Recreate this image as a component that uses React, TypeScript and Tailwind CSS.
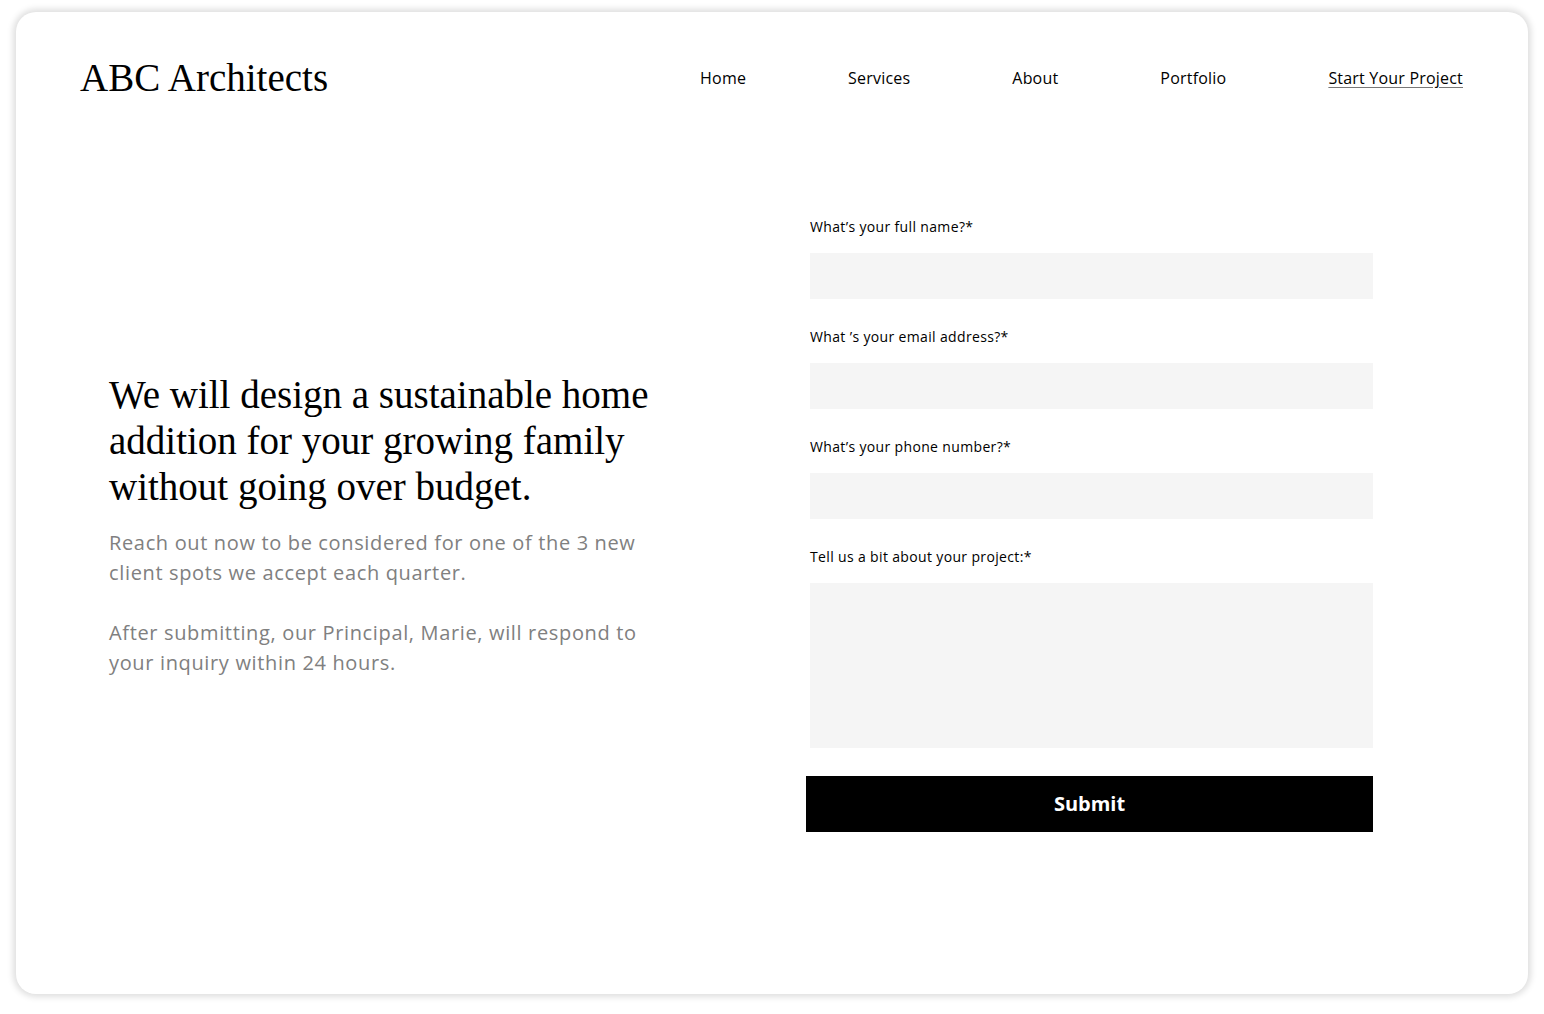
import React from 'react'

const sans = "font-['Open_Sans','Liberation_Sans',sans-serif]"
const serif = "font-['Liberation_Serif','DejaVu_Serif',serif]"

function Field({ label, tall }: { label: string; tall?: boolean }) {
  return (
    <div className="flex flex-col">
      <label className={`${sans} text-[14px] leading-[20px] tracking-[0.35px] text-black mb-[16px]`}>{label}</label>
      <div className={`bg-[#f5f5f5] w-[563px] ${tall ? 'h-[165px]' : 'h-[46px]'}`} />
    </div>
  )
}

export default function App() {
  const links = ['Home', 'Services', 'About', 'Portfolio']
  return (
    <div className="min-h-[1014px] bg-white pt-[12px] pl-[16px]">
      <div className="w-[1512px] h-[982px] bg-white rounded-[20px] shadow-[0_0_6px_3px_rgba(0,0,0,0.13)] flex flex-col">
        <header className="flex items-center justify-between pl-[64px] pr-[65px] pt-[42px]">
          <div className={`${serif} text-[39px] leading-[48px] text-black`}>ABC Architects</div>
          <nav className={`${sans} text-[16px] tracking-[0.2px] text-black flex items-center gap-[102px]`}>
            {links.map((l) => (
              <a key={l}>{l}</a>
            ))}
            <a className="underline underline-offset-[3px] decoration-[#777]">Start Your Project</a>
          </nav>
        </header>

        <main className="flex items-center mt-[115px]">
          <section className="w-[794px] pl-[93px]">
            <div className="w-[560px]">
              <h1 className={`${serif} text-[39px] leading-[46px] text-black`}>
                We will design a sustainable home addition for your growing family without going over budget.
              </h1>
              <p className={`${sans} text-[20px] leading-[30px] tracking-[0.65px] text-[#808080] mt-[18px]`}>
                Reach out now to be considered for one of the 3 new
                <br />
                client spots we accept each quarter.
              </p>
              <p className={`${sans} text-[20px] leading-[30px] tracking-[0.65px] text-[#808080] mt-[30px]`}>
                After submitting, our Principal, Marie, will respond to
                <br />
                your inquiry within 24 hours.
              </p>
            </div>
          </section>

          <form className="flex flex-col gap-[28px]">
            <Field label="What’s your full name?*" />
            <Field label="What ’s your email address?*" />
            <Field label="What’s your phone number?*" />
            <Field label="Tell us a bit about your project:*" tall />
            <button
              type="button"
              className={`${sans} -ml-[4px] w-[567px] h-[56px] bg-black text-white text-[20px] font-bold`}
            >
              Submit
            </button>
          </form>
        </main>
      </div>
    </div>
  )
}
